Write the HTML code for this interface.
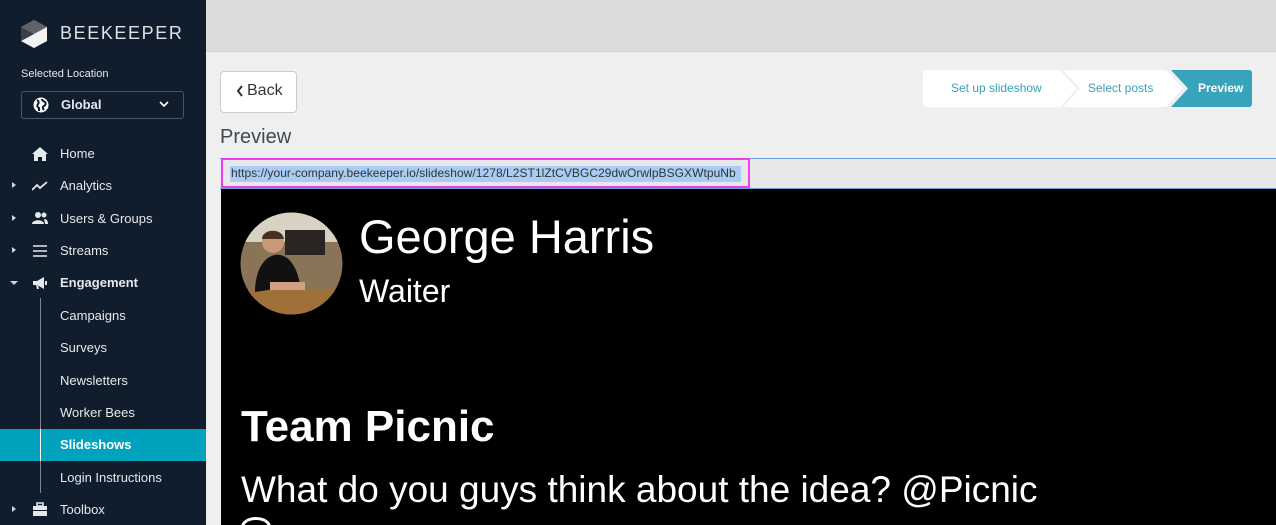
<!DOCTYPE html>
<html><head><meta charset="utf-8"><style>
*{margin:0;padding:0;box-sizing:border-box}
html,body{width:1276px;height:525px;overflow:hidden}
body{font-family:"Liberation Sans",sans-serif;background:#efefef;position:relative}
#sb{position:absolute;left:0;top:0;width:206px;height:525px;background:#0f1d2c;color:#e6e9ec}
.abs{position:absolute}
.nav{position:absolute;left:60px;font-size:13px;color:#e6e9ec}
.ico{position:absolute;left:32px;width:16px;height:14px}
.tri{position:absolute;left:12px;width:0;height:0;border-top:3.5px solid transparent;border-bottom:3.5px solid transparent;border-left:4px solid #cfd4d9}
#top{position:absolute;left:206px;top:0;width:1070px;height:52px;background:#dcdcdc;border-bottom:1px solid #cfcfcf}
#slide{position:absolute;left:221px;top:189px;width:1055px;height:336px;background:#000;color:#fff;overflow:hidden}
</style></head><body>
<div id="sb">
 <svg class="abs" style="left:21px;top:20px" width="26" height="28" viewBox="0 0 26 28"><polygon points="13,0 26,7 26,21 13,28 0,21 0,7" fill="#8a8f94"/><polygon points="13,0 26,7 13,14 0,7" fill="#5d6368"/><polygon points="26,7 26,21 13,28 0,21" fill="#f2f2f2"/><polygon points="0,7 13,14 0,21" fill="#3a4046"/></svg>
 <div class="abs" style="left:60px;top:23px;font-size:18px;letter-spacing:1.6px;color:#dfe2e5">BEEKEEPER</div>
 <div class="abs" style="left:21px;top:68px;font-size:11px">Selected Location</div>
 <div class="abs" style="left:21px;top:91px;width:163px;height:28px;border:1px solid #4a5663;border-radius:3px"></div>
 <svg class="abs" style="left:33px;top:97px" width="16" height="16" viewBox="0 0 16 16"><circle cx="8" cy="8" r="7.5" fill="#fff"/><path d="M4 3c2 1 2 3 1 4s-1 3 1 4l0 3M9 2c0 2 2 2 3 3s1 3-1 4-1 3 0 4" stroke="#0f1d2c" stroke-width="2" fill="none"/></svg>
 <div class="abs" style="left:61px;top:97px;font-size:13px;font-weight:bold">Global</div>
 <svg class="abs" style="left:159px;top:101px" width="10" height="7"><path d="M1 1l4 4 4-4" stroke="#fff" stroke-width="1.6" fill="none"/></svg>

 <svg class="ico" style="top:147px" viewBox="0 0 16 14"><path d="M8 0L0 7h2v7h4v-4h4v4h4V7h2z" fill="#e6e9ec"/></svg>
 <div class="nav" style="top:146px">Home</div>
 <div class="tri" style="top:182px"></div>
 <svg class="ico" style="top:179px" viewBox="0 0 16 14"><path d="M0 11l5-5 3 3 7-6" stroke="#e6e9ec" stroke-width="1.8" fill="none"/></svg>
 <div class="nav" style="top:178px">Analytics</div>
 <div class="tri" style="top:215px"></div>
 <svg class="ico" style="top:211px" viewBox="0 0 16 14"><circle cx="6" cy="4" r="3" fill="#e6e9ec"/><circle cx="12" cy="4" r="2.5" fill="#e6e9ec"/><path d="M0 13c0-5 12-5 12 0zM12 8c3 0 4 2 4 5h-3z" fill="#e6e9ec"/></svg>
 <div class="nav" style="top:211px">Users &amp; Groups</div>
 <div class="tri" style="top:247px"></div>
 <svg class="ico" style="top:244px" viewBox="0 0 16 14"><path d="M1 2h14M1 7h14M1 12h14" stroke="#e6e9ec" stroke-width="1.6"/></svg>
 <div class="nav" style="top:243px">Streams</div>
 <div class="abs" style="left:10px;top:281px;border-left:4px solid transparent;border-right:4px solid transparent;border-top:4px solid #cfd4d9"></div>
 <svg class="ico" style="top:276px" viewBox="0 0 16 14"><path d="M1 5h4l7-4v12l-7-4H1zM4 9l1 4h2l-1-4M13 5h2v4h-2z" fill="#e6e9ec"/></svg>
 <div class="nav" style="top:275px;font-weight:bold">Engagement</div>
 <div class="abs" style="left:40px;top:298px;width:1px;height:195px;background:#7d8792"></div>
 <div class="nav" style="top:308px">Campaigns</div>
 <div class="nav" style="top:340px">Surveys</div>
 <div class="nav" style="top:373px">Newsletters</div>
 <div class="nav" style="top:405px">Worker Bees</div>
 <div class="abs" style="left:0;top:429px;width:206px;height:32px;background:#00a2bd"></div>
 <div class="abs" style="left:40px;top:429px;width:1px;height:32px;background:#fff"></div>
 <div class="nav" style="top:437px;font-weight:bold;color:#fff">Slideshows</div>
 <div class="nav" style="top:470px">Login Instructions</div>
 <div class="tri" style="top:506px"></div>
 <svg class="ico" style="top:502px" viewBox="0 0 16 14"><path d="M5 1h6v3H5z" stroke="#e6e9ec" stroke-width="1.5" fill="none"/><path d="M1 4h14v4H1zM1 9h14v5H1z" fill="#e6e9ec"/></svg>
 <div class="nav" style="top:502px">Toolbox</div>
</div>
<div id="top"></div>
<div class="abs" style="left:220px;top:71px;width:77px;height:42px;background:#fff;border:1px solid #ccc;border-radius:4px"></div>
<svg class="abs" style="left:236px;top:85px" width="8" height="12"><path d="M6 1L2 6l4 5" stroke="#333" stroke-width="2" fill="none"/></svg>
<div class="abs" style="left:247px;top:82px;font-size:16px;color:#333">Back</div>
<div class="abs" style="left:220px;top:126px;font-size:20px;color:#3d4a52">Preview</div>
<!-- steps -->
<svg class="abs" style="left:923px;top:70px" width="330" height="37" viewBox="0 0 330 37">
 <path d="M3 0h134l17 18.5L137 37H3a3 3 0 0 1-3-3V3a3 3 0 0 1 3-3z" fill="#fff"/>
 <path d="M140 0h103l17 18.5L243 37H140l17-18.5z" fill="#fff"/>
 <path d="M248 0h78a3 3 0 0 1 3 3v31a3 3 0 0 1-3 3h-78l17-18.5z" fill="#37a4bc"/>
</svg>
<div class="abs" style="left:951px;top:81px;font-size:12px;color:#3a9fb8">Set up slideshow</div>
<div class="abs" style="left:1088px;top:81px;font-size:12px;color:#3a9fb8">Select posts</div>
<div class="abs" style="left:1198px;top:81px;font-size:12px;color:#fff;font-weight:bold">Preview</div>
<!-- url -->
<div class="abs" style="left:220px;top:158px;width:1056px;height:31px;background:#e8e8e8;border-top:1px solid #6a9fd8;border-bottom:1px solid #6a9fd8"></div>
<div class="abs" style="left:221px;top:158px;width:529px;height:30px;border:2px solid #f03cf0"></div>
<div class="abs" style="left:230px;top:166px;width:511px;height:16px;background:#a8ccf4"></div>
<div class="abs" style="left:231px;top:166px;font-size:12px;color:#333;white-space:nowrap;letter-spacing:0.05px">https://your-company.beekeeper.io/slideshow/1278/L2ST1lZtCVBGC29dwOrwlpBSGXWtpuNb</div>
<div id="slide">
 <svg class="abs" style="left:19px;top:23px" width="103" height="103" viewBox="0 0 103 103"><defs><clipPath id="c"><circle cx="51.5" cy="51.5" r="51"/></clipPath></defs><g clip-path="url(#c)"><rect width="103" height="103" fill="#8a7458"/><rect width="103" height="30" fill="#d8d2c4"/><rect x="45" y="18" width="40" height="25" fill="#2a2520"/><rect y="78" width="103" height="25" fill="#a0703a"/><path d="M15 80c0-20 8-35 20-37s22 10 25 30z" fill="#111"/><circle cx="33" cy="30" r="11" fill="#c89a78"/><path d="M22 27c0-10 20-12 22 0" fill="#4a3020"/><rect x="30" y="70" width="35" height="8" fill="#d2a080"/></g></svg>
 <div class="abs" style="left:138px;top:20px;font-size:47px;white-space:nowrap">George Harris</div>
 <div class="abs" style="left:138px;top:84px;font-size:32px">Waiter</div>
 <div class="abs" style="left:20px;top:213px;font-size:44px;font-weight:bold">Team Picnic</div>
 <div class="abs" style="left:20px;top:280px;font-size:37px;white-space:nowrap">What do you guys think about the idea? @Picnic</div>
 <div class="abs" style="left:20px;top:328px;width:30px;height:20px;border:3px solid #fff;border-radius:50%"></div>
</div>
</body></html>
